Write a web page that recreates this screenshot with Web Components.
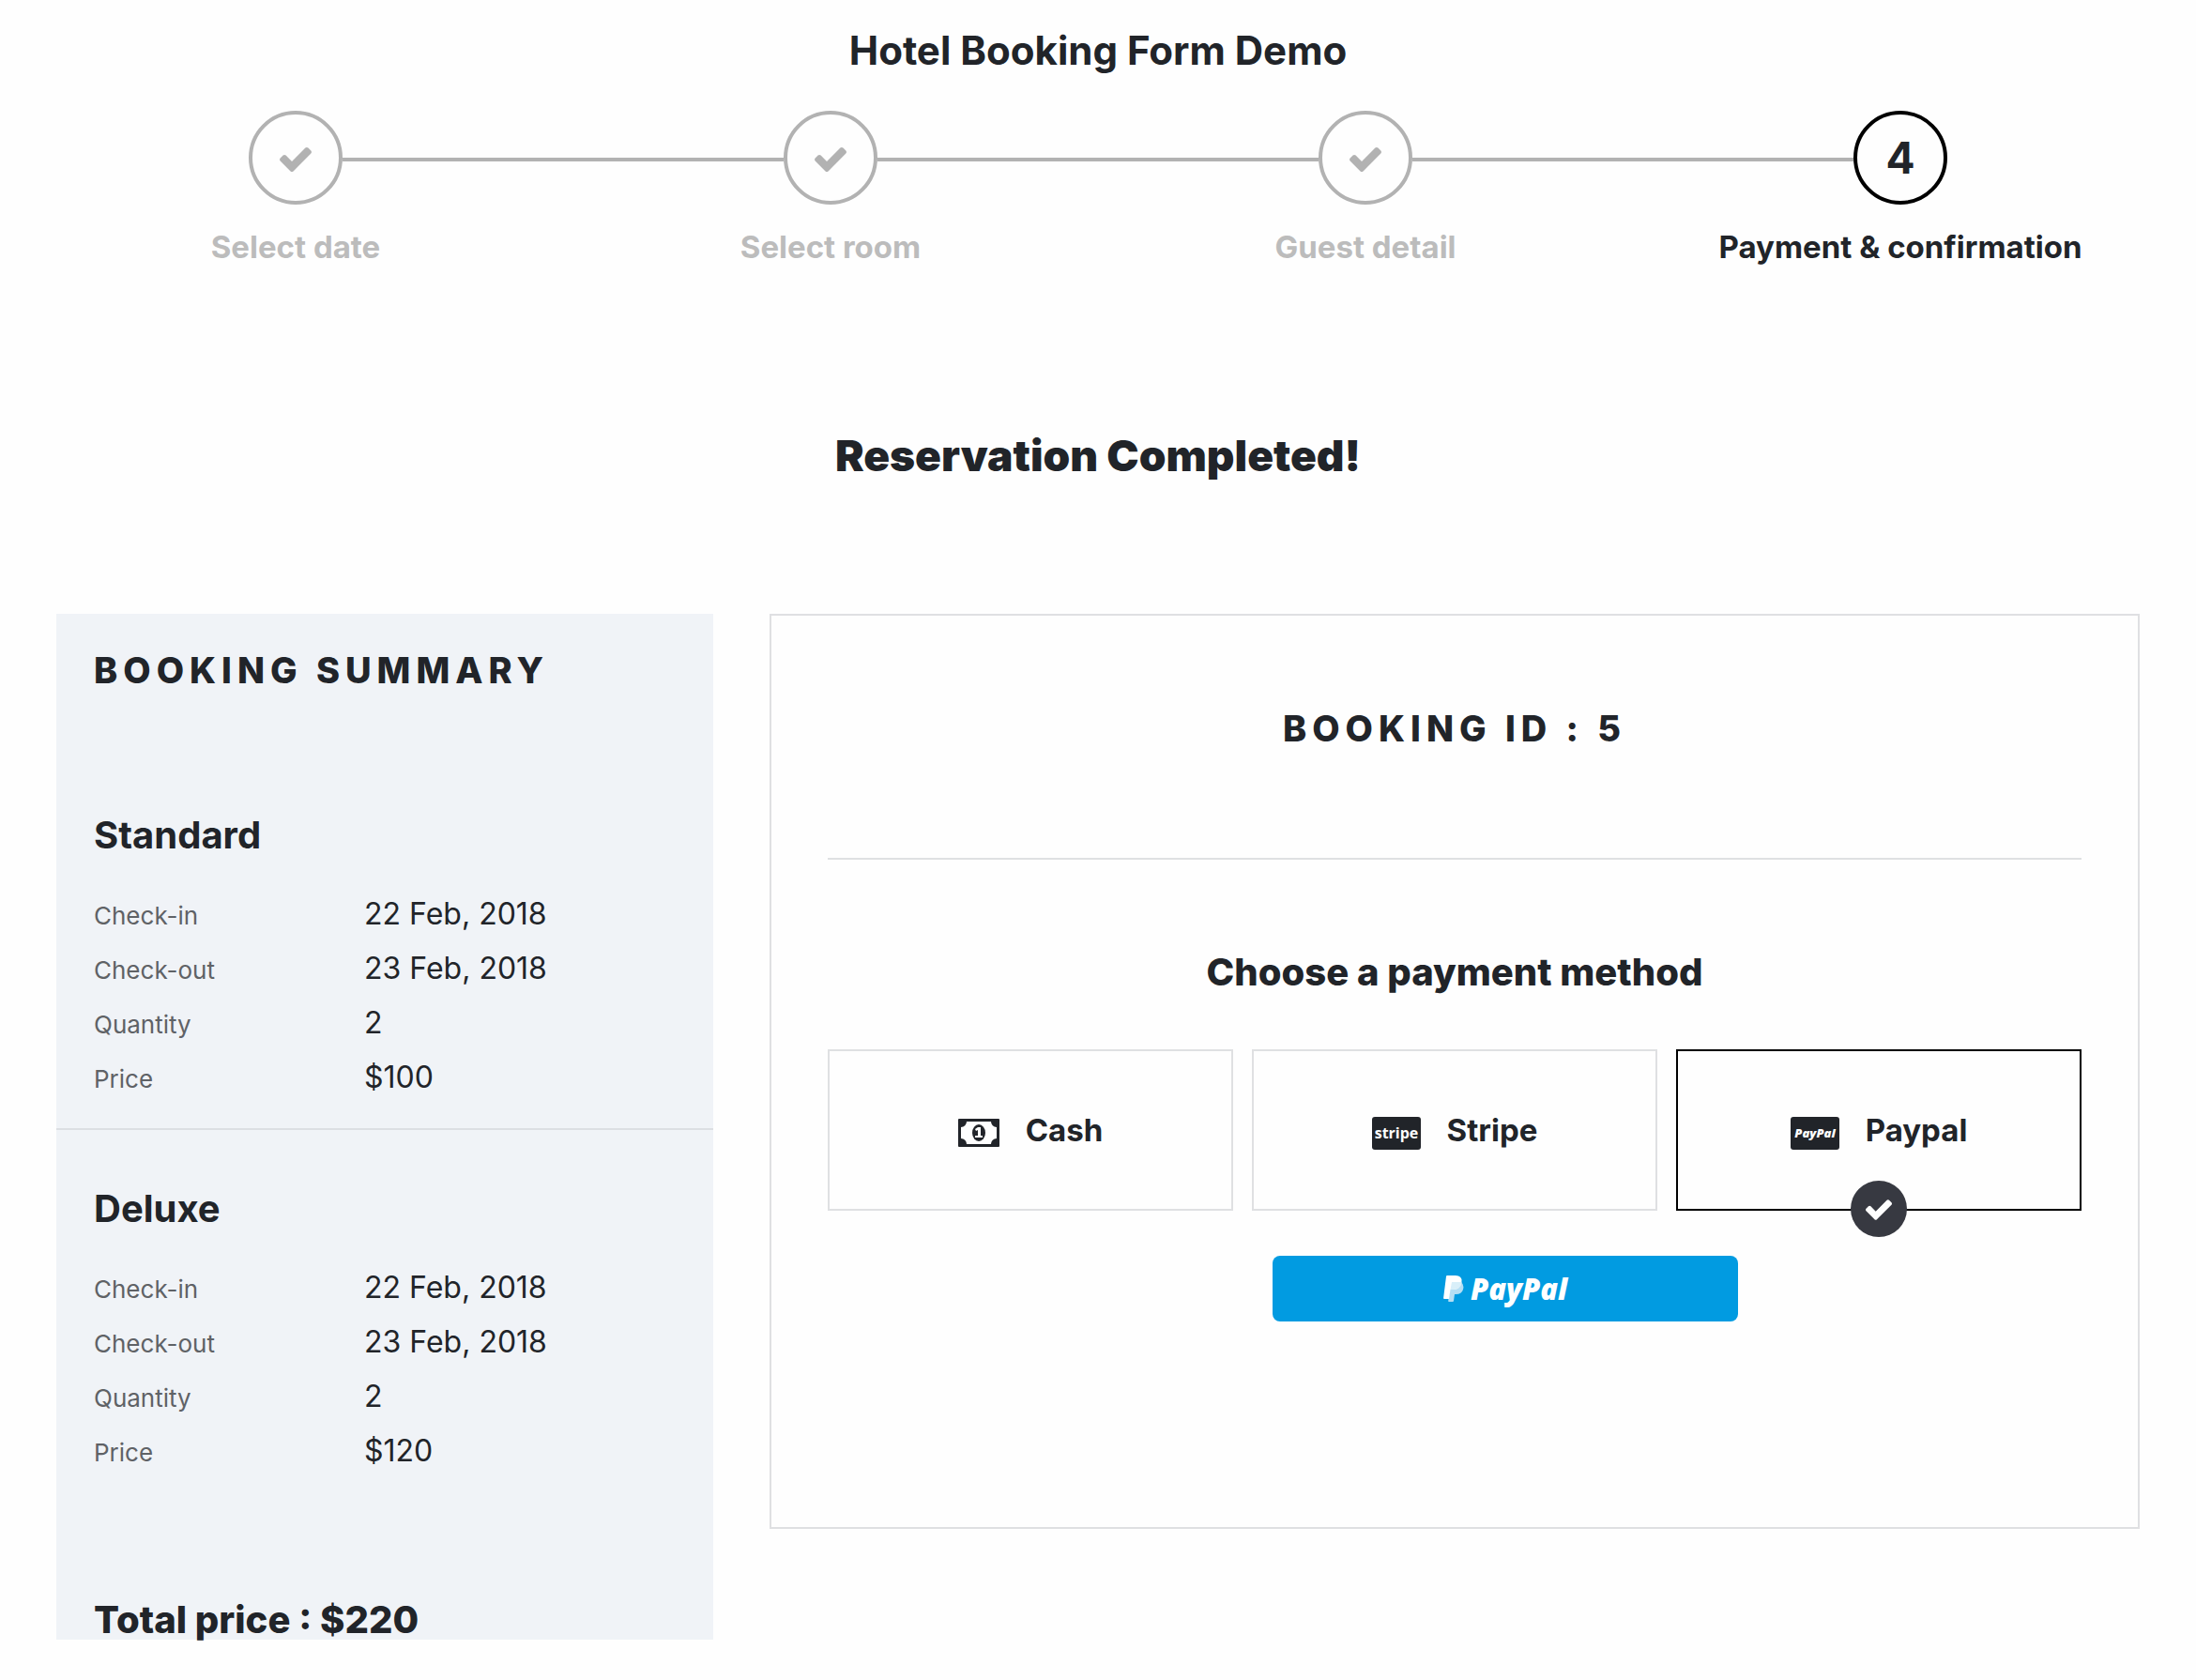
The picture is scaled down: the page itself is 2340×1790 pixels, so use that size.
<!DOCTYPE html>
<html lang="en">
<head>
<meta charset="utf-8">
<title>Hotel Booking Form Demo</title>
<style>
  body { margin: 0; background: #fefefe; color: #212429; font-family: Inter, "Liberation Sans", sans-serif; }
</style>
</head>
<body>
<booking-page>
  <span slot="title">Hotel Booking Form Demo</span>
  <booking-steps slot="steps">
    <booking-step done first>Select date</booking-step>
    <booking-step done>Select room</booking-step>
    <booking-step done>Guest detail</booking-step>
    <booking-step number="4" last>Payment &amp; confirmation</booking-step>
  </booking-steps>
  <span slot="message">Reservation Completed!</span>
  <booking-summary slot="summary">
    <room-summary check-in="22 Feb, 2018" check-out="23 Feb, 2018" quantity="2" price="$100">Standard</room-summary>
    <room-summary check-in="22 Feb, 2018" check-out="23 Feb, 2018" quantity="2" price="$120">Deluxe</room-summary>
    <span slot="total">Total price : $220</span>
  </booking-summary>
  <payment-panel slot="payment">
    <span slot="id">BOOKING ID : 5</span>
    <payment-methods></payment-methods>
    <paypal-button slot="action"></paypal-button>
  </payment-panel>
</booking-page>

<script>
const CHECK = `<svg class="check" viewBox="121 334 1550 1188" aria-hidden="true"><path fill="currentColor" d="M1671 566q0 40-28 68l-724 724-136 136q-28 28-68 28t-68-28l-136-136-362-362q-28-28-28-68t28-68l136-136q28-28 68-28t68 28l294 295 656-657q28-28 68-28t68 28l136 136q28 28 28 68z"/></svg>`;

function define(name, render) {
  customElements.define(name, class extends HTMLElement {
    connectedCallback() {
      if (this.shadowRoot) return;
      this.attachShadow({ mode: "open" }).innerHTML = render(this);
    }
  });
}

define("booking-page", () => `
  <style>
    :host { display: block; }
    h1, h2 { margin: 0; text-align: center; }
    header { padding: 30px 30px 0; }
    h1 { font-size: 42px; line-height: 48px; font-weight: 700; margin-bottom: 40px; }
    h2 { font-size: 46px; line-height: 56px; font-weight: 900; margin: 174px 0 141px; }
    main { display: grid; grid-template-columns: 700fr 1460fr; gap: 60px; align-items: start; padding: 0 60px 43px; }
  </style>
  <header><h1><slot name="title"></slot></h1><slot name="steps"></slot></header>
  <h2><slot name="message"></slot></h2>
  <main><slot name="summary"></slot><slot name="payment"></slot></main>`);

define("booking-steps", () => `
  <style>
    :host { display: grid; grid-template-columns: repeat(4, 1fr); }
  </style>
  <slot></slot>`);

define("booking-step", el => `
  <style>
    :host { display: block; text-align: center; }
    :host([done]) { color: #b2b2b2; }
    .track { display: flex; align-items: center; margin-bottom: 25px; }
    .line { flex: 1; height: 4px; margin-top: 4px; background: #b2b2b2; }
    :host([first]) .line:first-child, :host([last]) .line:last-child { visibility: hidden; }
    .circle { box-sizing: border-box; width: 100px; height: 100px; border: 4px solid #000; border-radius: 50%;
      display: flex; align-items: center; justify-content: center; font-size: 46px; line-height: 56px; font-weight: 700; }
    :host([done]) .circle { border-color: #b2b2b2; }
    .check { width: 34px; height: 26px; margin-top: 4px; }
    .label { font-size: 33px; line-height: 40px; font-weight: 700; }
    :host([done]) .label { color: #bcbcbc; }
  </style>
  <div class="track">
    <div class="line"></div>
    <div class="circle">${el.hasAttribute("done") ? CHECK : el.getAttribute("number")}</div>
    <div class="line"></div>
  </div>
  <div class="label"><slot></slot></div>`);

define("booking-summary", () => `
  <style>
    :host { display: block; background: #f0f3f7; padding-top: 36px; }
    h3, p { margin: 0; padding: 0 40px; font-weight: 800; }
    h3 { font-size: 38px; line-height: 48px; letter-spacing: 6px; margin-bottom: 68px; }
    p { font-size: 40px; line-height: 42px; margin-top: 105px; }
  </style>
  <h3>BOOKING SUMMARY</h3>
  <slot></slot>
  <p><slot name="total"></slot></p>`);

define("room-summary", el => `
  <style>
    :host { display: block; padding: 60px 40px 25px; }
    :host(:first-child) { border-bottom: 2px solid #dcdfe3; }
    h4 { margin: 0 0 31px; font-size: 40px; line-height: 48px; font-weight: 700; }
    dl { margin: 0; display: grid; grid-template-columns: 288px 1fr; grid-auto-rows: 58px; align-items: baseline; line-height: 58px; }
    dt { font-size: 26px; color: #5f6266; }
    dd { margin: 0; font-size: 32px; }
  </style>
  <h4><slot></slot></h4>
  <dl>
    <dt>Check-in</dt><dd>${el.getAttribute("check-in")}</dd>
    <dt>Check-out</dt><dd>${el.getAttribute("check-out")}</dd>
    <dt>Quantity</dt><dd>${el.getAttribute("quantity")}</dd>
    <dt>Price</dt><dd>${el.getAttribute("price")}</dd>
  </dl>`);

define("payment-panel", () => `
  <style>
    :host { display: block; border: 2px solid #dfe0e2; padding: 96px 60px 219px; text-align: center; }
    h3, h4 { margin: 0; line-height: 48px; font-weight: 800; }
    h3 { font-size: 38px; letter-spacing: 6px; }
    hr { border: 0; height: 2px; background: #dfe0e2; margin: 114px 0 96px; }
    h4 { font-size: 40px; margin-bottom: 58px; }
    .action { margin-top: 48px; padding-left: 108px; display: flex; justify-content: center; }
  </style>
  <h3><slot name="id"></slot></h3>
  <hr>
  <h4>Choose a payment method</h4>
  <slot></slot>
  <div class="action"><slot name="action"></slot></div>`);

const CASH = `<svg width="44" height="30" viewBox="0 0 44 30" aria-hidden="true">
  <rect width="44" height="30" rx="1" fill="#212429"/>
  <path fill="#fefefe" d="M9 3H35A6 6 0 0 0 41 9V21A6 6 0 0 0 35 27H9A6 6 0 0 0 3 21V9A6 6 0 0 0 9 3Z"/>
  <ellipse cx="22" cy="15" rx="7" ry="9" fill="#212429"/>
  <path fill="#fefefe" d="M21 9H24V18H26V20H18V18H21V12L19 13L18 11Z"/></svg>`;
const card = text => `<svg width="52" height="35" viewBox="0 0 52 35" aria-hidden="true">
  <rect width="52" height="35" rx="3" fill="#212429"/>${text}</svg>`;
const STRIPE = card(`<text x="26" y="23" text-anchor="middle" fill="#fefefe" font-family="Open Sans" font-weight="700" font-size="16">stripe</text>`);
const PAYPAL = card(`<text x="26" y="22" text-anchor="middle" fill="#fefefe" font-family="Open Sans" font-weight="800" font-style="italic" font-size="13">PayPal</text>`);

define("payment-methods", () => `
  <style>
    :host { display: block; }
    fieldset { border: 0; margin: 0; padding: 0; display: grid; grid-template-columns: repeat(3, 1fr); gap: 20px; }
    label { box-sizing: border-box; position: relative; height: 172px; border: 2px solid #dfe0e2; cursor: pointer;
      display: flex; align-items: center; justify-content: center; gap: 28px; font-size: 33px; line-height: 40px; font-weight: 700; }
    label > svg { margin-top: 6px; }
    input { position: absolute; opacity: 0; margin: 0; }
    .badge { display: none; position: absolute; left: 50%; bottom: -30px; margin-left: -30px; width: 60px; height: 60px;
      border-radius: 50%; background: #373941; color: #fefefe; align-items: center; justify-content: center; }
    .badge .check { width: 28px; height: 22px; margin-top: 2px; }
    label:has(:checked) { border-color: #000; }
    :checked ~ .badge { display: flex; }
  </style>
  <fieldset aria-label="Payment method">
    ${[["Cash", CASH], ["Stripe", STRIPE], ["Paypal", PAYPAL]].map(([name, icon]) => `
    <label><input type="radio" name="method" value="${name}"${name === "Paypal" ? " checked" : ""}>${icon}<span>${name}</span><span class="badge">${CHECK}</span></label>`).join("")}
  </fieldset>`);

define("paypal-button", () => `
  <style>
    :host { display: block; }
    button { width: 496px; height: 70px; border: 0; border-radius: 8px; background: #019be1; color: #fff; cursor: pointer; padding: 0;
      display: flex; align-items: center; justify-content: center; gap: 7px; font: italic 800 31px/40px "Open Sans", sans-serif; }
  </style>
  <button type="button">
    <svg width="22" height="28" viewBox="0 0 22 28" aria-hidden="true">
      <path fill="#b5def4" d="M8 7H19Q22.500 10 21 15Q19.500 20 13.500 20H12L11 27Q10.800 28 10 28H6Q5 28 5.200 27Z"/>
      <path fill="#fff" d="M4 0H13Q20 0 19.500 6.500Q18.500 15 10.500 15H7.500L6 25H1Q0 25 0.100 24L3 1Q3.200 0 4 0Z"/>
      <path fill="#d9eff9" d="M9 7H19.500Q18.500 15 10.500 15H7.500Z"/>
    </svg>
    <span>PayPal</span>
  </button>`);
</script>
</body>
</html>
